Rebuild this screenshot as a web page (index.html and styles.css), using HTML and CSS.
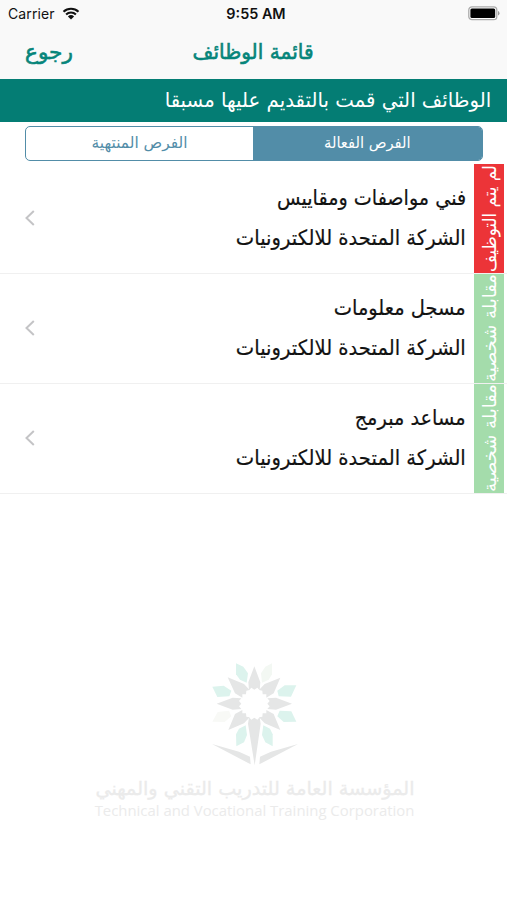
FILE: index.html
```html
<!DOCTYPE html>
<html lang="ar">
<head>
<meta charset="utf-8">
<title>قائمة الوظائف</title>
<link rel="stylesheet" href="styles.css">
</head>
<body>
<header class="top">
  <div class="status">
    <div class="carrier"><span>Carrier</span>
      <svg class="wifi" viewBox="0 0 18 13"><path d="M1.5 4.8a10.8 10.8 0 0 1 15 0M4.1 7.5a7 7 0 0 1 9.8 0" fill="none" stroke="#111" stroke-width="2.1"/><path d="M9 12.6 5.9 9.5a4.5 4.5 0 0 1 6.2 0z" fill="#111"/></svg>
    </div>
    <div class="time">9:55 AM</div>
    <svg class="battery" viewBox="0 0 32 15"><rect x=".8" y=".8" width="28" height="12.9" rx="3.2" fill="#fff" stroke="#aaa" stroke-width="1.3"/><rect x="2.4" y="2.5" width="24.8" height="9.5" rx="1.5" fill="#000"/><path d="M30 5v4.5q1.5-.5 1.5-2.2T30 5" fill="#999"/></svg>
  </div>
  <nav class="nav">
    <a class="back"><span>رجوع</span></a>
    <h1 class="title"><span>قائمة الوظائف</span></h1>
  </nav>
</header>
<div class="banner" dir="rtl"><span>الوظائف التي قمت بالتقديم عليها مسبقا</span></div>
<div class="tabs">
  <div class="tab"><span>الفرص المنتهية</span></div>
  <div class="tab active"><span>الفرص الفعالة</span></div>
</div>
<main class="jobs">
  <section class="job">
    <svg class="chevron" viewBox="0 0 10 16"><path d="M8.8 1 1.5 8l7.3 7"/></svg>
    <div class="info" dir="rtl"><p class="t1"><span>فني مواصفات ومقاييس</span></p><p class="co"><span>الشركة المتحدة للالكترونيات</span></p></div>
    <div class="state rejected" dir="rtl"><span>لم يتم التوظيف</span></div>
  </section>
  <section class="job">
    <svg class="chevron" viewBox="0 0 10 16"><path d="M8.8 1 1.5 8l7.3 7"/></svg>
    <div class="info" dir="rtl"><p class="t2"><span>مسجل معلومات</span></p><p class="co"><span>الشركة المتحدة للالكترونيات</span></p></div>
    <div class="state" dir="rtl"><span>مقابلة شخصية</span></div>
  </section>
  <section class="job">
    <svg class="chevron" viewBox="0 0 10 16"><path d="M8.8 1 1.5 8l7.3 7"/></svg>
    <div class="info" dir="rtl"><p class="t3"><span>مساعد مبرمج</span></p><p class="co"><span>الشركة المتحدة للالكترونيات</span></p></div>
    <div class="state" dir="rtl"><span>مقابلة شخصية</span></div>
  </section>
</main>
<footer class="brand">
  <svg class="logo" viewBox="0 0 390 375">
    <g fill="#e5e6e6">
      <path d="M193 46 211 94 209 118 202 110 193 116 184 110 177 118 175 94z"/>
      <path d="M271 80 251 127 229 140 229 130 218 130 217 119 207 117 224 99z"/>
      <path d="M306 158 258 176 232 174 239 166 232 158 239 150 232 142 258 140z"/>
      <path d="M271 237 224 217 207 199 217 197 218 187 229 187 229 177 251 189z"/>
      <path d="M115 237 162 217 179 199 169 197 168 187 157 187 157 177 135 189z"/>
      <path d="M80 158 128 176 154 174 147 166 154 158 147 150 154 142 128 140z"/>
      <path d="M113 79 135 127 157 140 157 130 168 130 169 119 179 117 162 99z"/>
      <path d="M177 199 184 206 193 200 202 206 209 199 212 218 194 343 174 218z"/>
      <path d="M66 279 147 302 180 317 182 340zM324 279 243 302 210 317 208 340z"/>
    </g>
    <g fill="#dcf3ed">
      <path d="M138 37 160 47 174 67 170 95 150 86 138 70z"/>
      <path d="M67 107 101 104 124 119 118 136 82 138z"/>
      <path d="M319 103 284 103 262 119 266 136 303 137z"/>
      <path d="M319 212 304 181 269 179 262 196 281 213z"/>
      <path d="M167 223 171 252 162 274 139 286 138 250 147 233z"/>
      <path d="M220 223 216 252 226 274 248 286 248 250 240 233z"/>
    </g>
    <g fill="#f3f8f3"><path d="M246 37 226 47 213 67 216 95 236 86 246 70z"/><path fill="#f8f9f6" d="M67 212 83 183 117 179 124 196 104 213z"/></g>
  </svg>
  <p class="brand-ar" dir="rtl"><span>المؤسسة العامة للتدريب التقني والمهني</span></p>
  <p class="brand-en"><span>Technical and Vocational Training Corporation</span></p>
</footer>
</body>
</html>
```
FILE: styles.css
```css
* { box-sizing: border-box; }
body { margin: 0; height: 900px; background: #fff; font-family: "DejaVu Sans", sans-serif; color: #111; overflow: hidden; display: flex; flex-direction: column; }
p, h1 { margin: 0; }
span { display: inline-block; white-space: nowrap; }
.top { height: 79px; background: #f9f9f9; flex: none; }
.status { height: 27px; display: grid; grid-template-columns: 1fr auto 1fr; align-items: center; padding: 0 7px 0 8px; font-family: Inter, sans-serif; font-size: 14px; }
.carrier { display: flex; align-items: center; gap: 7px; }
.carrier span { letter-spacing: .1px; }
.wifi { width: 18px; height: 13px; }
.time { font-weight: 600; font-size: 14.4px; padding-left: 4px; }
.battery { width: 32px; height: 15px; justify-self: end; }
.nav { height: 52px; display: grid; grid-template-columns: 1fr auto 1fr; align-items: center; padding: 0 25px; color: #06857a; }
.back, .title { font-size: 21px; font-weight: normal; line-height: 46px; padding-bottom: 3px; -webkit-text-stroke: .6px #06857a; }
.back span { transform: scaleX(1.03); transform-origin: left; }
.title span { transform: scaleX(.96); }
.banner { height: 43px; flex: none; background: #047d74; color: #fff; font-size: 20px; line-height: 43px; padding-right: 16px; }
.banner span { transform: scaleX(.986); transform-origin: right; }
.tabs { height: 35px; flex: none; margin: 4px 24px 0 25px; display: flex; border: 1px solid #528da8; border-radius: 5px; overflow: hidden; color: #528da8; }
.tab { width: 227px; text-align: center; font-size: 15.4px; line-height: 32px; }
.active { flex: 1; background: #528da8; color: #fff; }
.active span { transform: scaleX(.955); }
.jobs { margin-top: 3px; flex: none; }
.job { height: 110px; display: flex; align-items: stretch; border-bottom: 1px solid #f0f0f0; padding-right: 3px; }
.chevron { width: 10px; height: 16px; margin: 46px 0 0 25px; fill: none; stroke: #c4c4c6; stroke-width: 2; }
.info { flex: 1; padding: 14px 8px 0 0; font-size: 21px; line-height: 40px; -webkit-text-stroke: .2px #111; }
.info span { transform-origin: right; }
.t1 span { transform: scaleX(.913); }
.t2 span { transform: scaleX(.925); }
.t3 span { transform: scaleX(.92); }
.co span { transform: scaleX(.932); }
.state { width: 30px; background: #a4dcab; color: #fff; display: flex; align-items: center; justify-content: center; writing-mode: vertical-rl; transform: rotate(180deg); font-size: 18px; line-height: 30px; }
.state span { transform: translateX(-1px); }
.rejected { background: #ec3438; }
.rejected span { transform: translateX(-1px) scaleY(.93); }
.brand { margin-top: 157px; padding-left: 2px; display: flex; flex-direction: column; align-items: center; color: #ebebeb; }
.logo { width: 130px; height: 125px; flex: none; }
.brand-ar { font-size: 19px; line-height: 24px; -webkit-text-stroke: .3px #ebebeb; }
.brand-ar span { transform: scaleX(1.01); }
.brand-en { font-family: "Open Sans", sans-serif; font-size: 14.9px; line-height: 21px; }
```
